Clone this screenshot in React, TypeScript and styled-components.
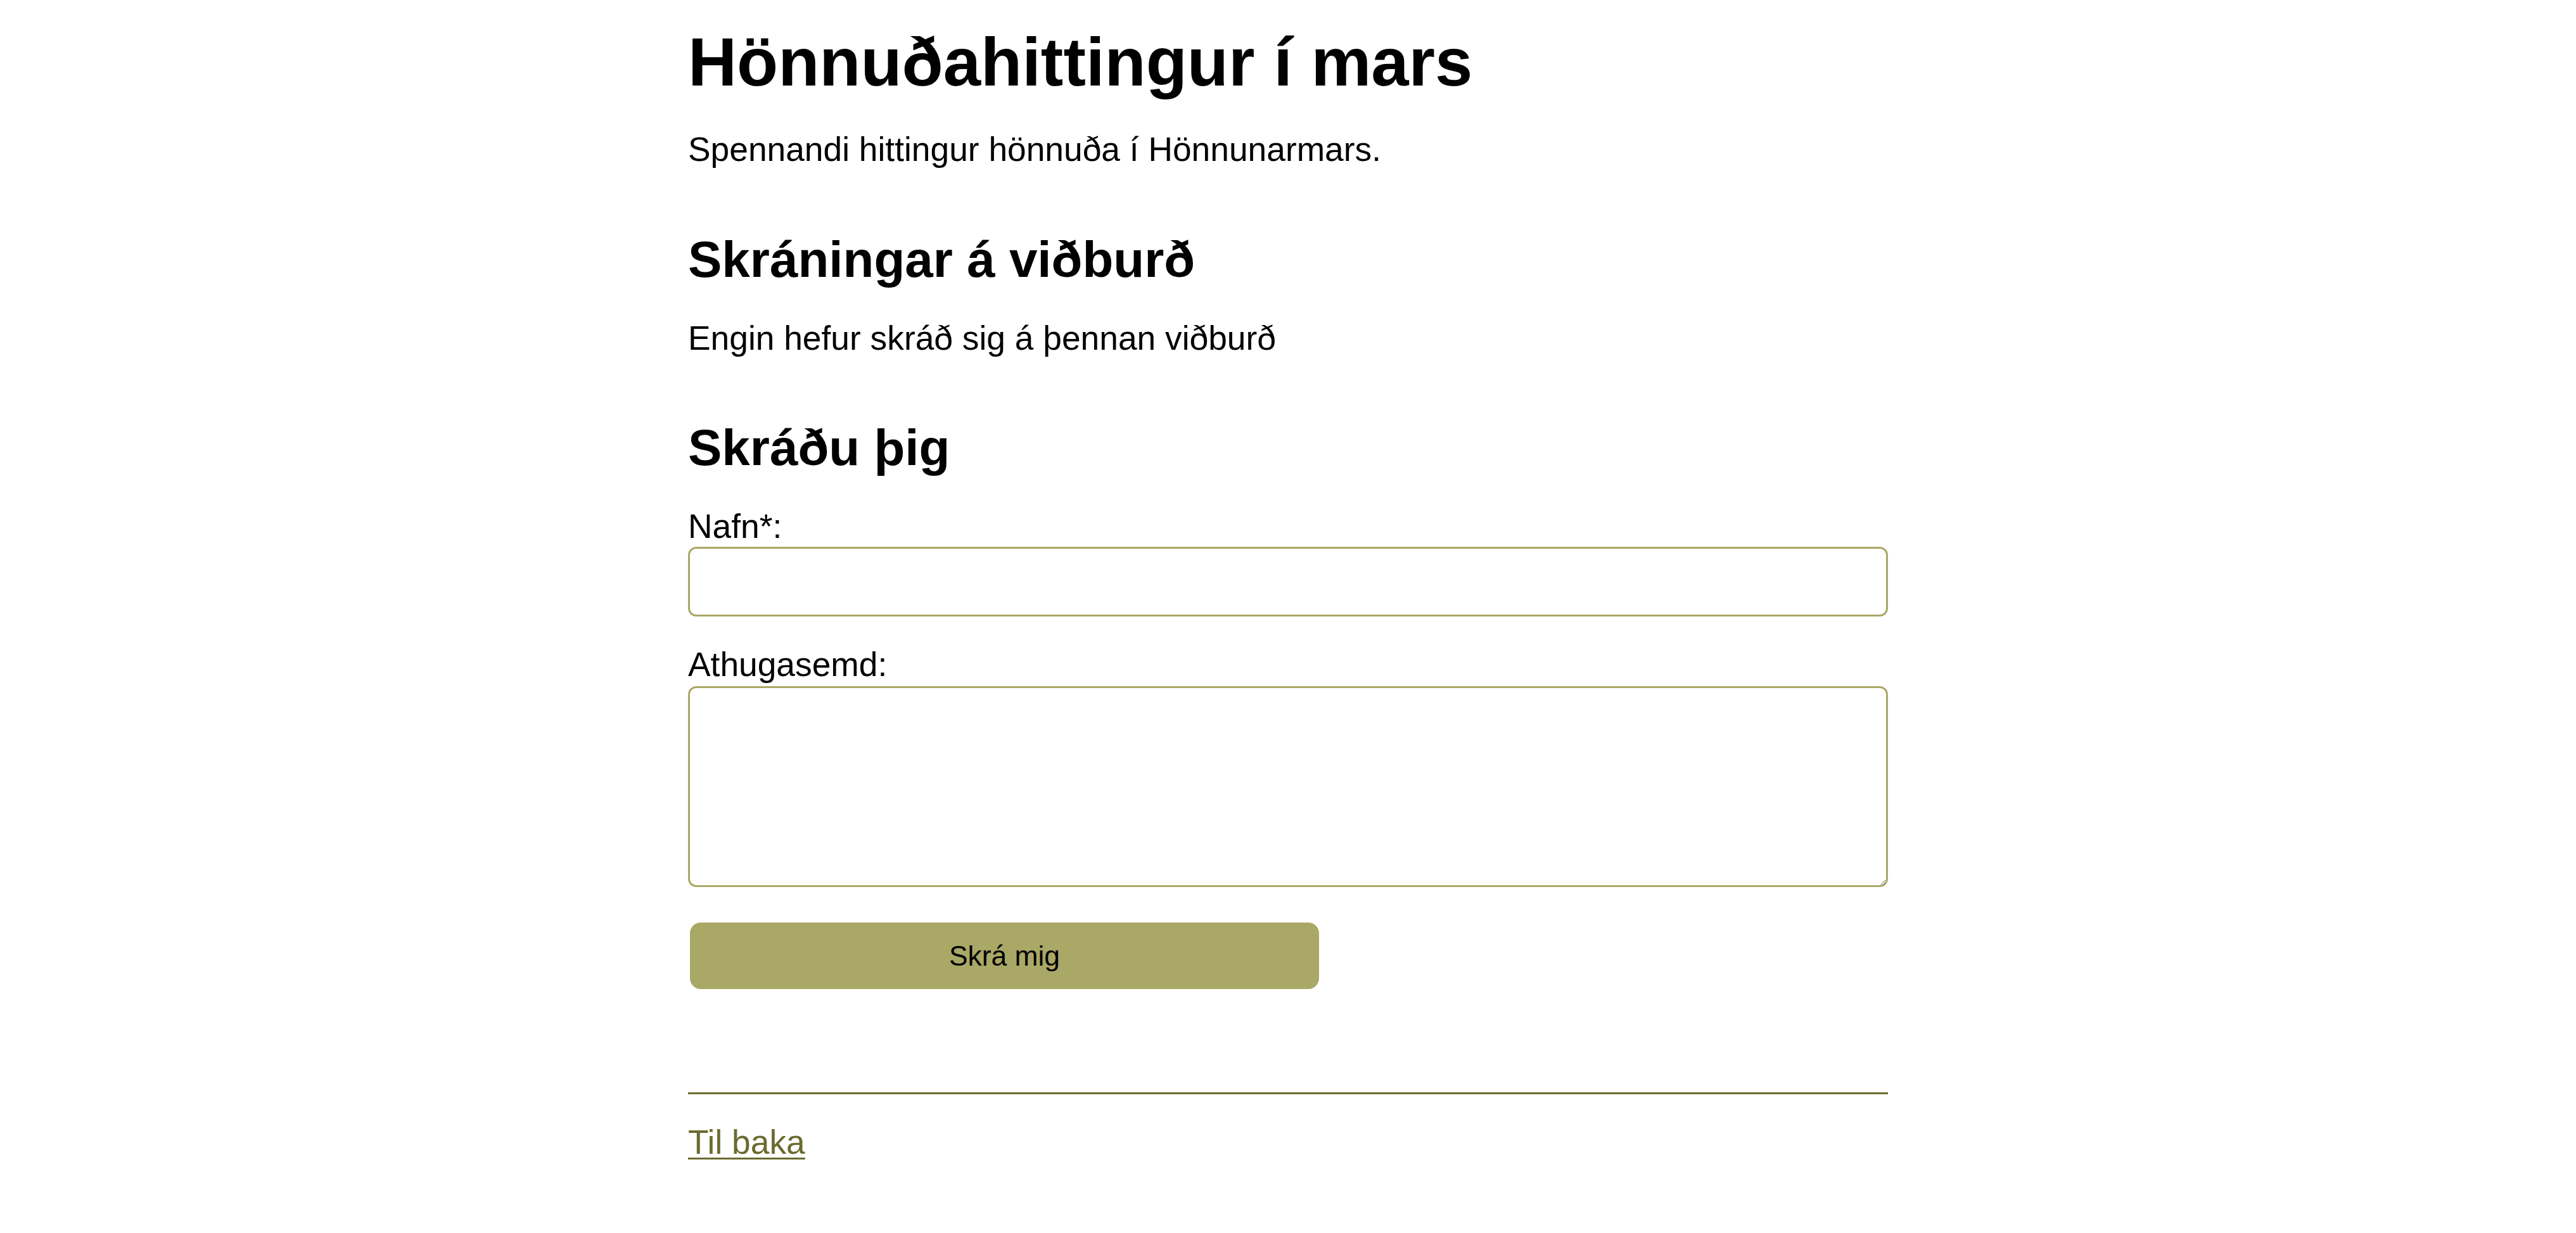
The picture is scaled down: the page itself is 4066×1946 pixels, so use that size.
import React from "react";
import styled, { createGlobalStyle } from "styled-components";

const Global = createGlobalStyle`
  html, body { margin: 0; padding: 0; background: #ffffff; }
  body { font-family: "Liberation Sans", Arial, Helvetica, sans-serif; color: #000; }
  * { box-sizing: border-box; }
`;

const Main = styled.main`
  width: 1894px;
  margin: 0 auto;
  padding-top: 34px;
  display: flex;
  flex-direction: column;
`;

const Title = styled.h1`
  margin: 0;
  font-size: 106.67px;
  line-height: 128px;
  font-weight: 700;
`;

const Heading = styled.h2<{ $gap: number }>`
  margin: ${(p) => p.$gap}px 0 0;
  font-size: 80px;
  line-height: 96px;
  font-weight: 700;
`;

const Text = styled.p<{ $gap: number }>`
  margin: ${(p) => p.$gap}px 0 0;
  font-size: 53.33px;
  line-height: 64px;
`;

const Form = styled.form`
  display: flex;
  flex-direction: column;
  margin-top: 44px;
`;

const Field = styled.div<{ $gap: number }>`
  display: flex;
  flex-direction: column;
  margin-top: ${(p) => p.$gap}px;
`;

const Label = styled.label`
  font-size: 53.33px;
  line-height: 64px;
`;

const Input = styled.input`
  width: 100%;
  height: 110px;
  border: 3px solid #aaa866;
  border-radius: 13px;
  padding: 0 16px;
  font: inherit;
  font-size: 44px;
  outline: none;
`;

const TextArea = styled.textarea`
  width: 100%;
  height: 317px;
  margin-top: 2px;
  border: 3px solid #aaa866;
  border-radius: 13px;
  padding: 16px;
  font: inherit;
  font-size: 44px;
  outline: none;
  resize: vertical;
`;

const Button = styled.button`
  align-self: flex-start;
  margin-top: 56px;
  margin-left: 3px;
  width: 993px;
  height: 105px;
  border: none;
  border-radius: 17px;
  background: #aaa866;
  color: #000;
  font-family: "Liberation Sans", Arial, Helvetica, sans-serif;
  font-size: 44.4px;
  cursor: pointer;
`;

const Rule = styled.hr`
  margin: 163px 0 0;
  border: none;
  height: 3px;
  background: #6b6b2f;
`;

const BackLink = styled.a`
  align-self: flex-start;
  margin-top: 44px;
  font-size: 53.33px;
  line-height: 64px;
  color: #6b6b2f;
  text-decoration: underline;
  text-decoration-thickness: 3.33px;
  text-underline-offset: 6px;
`;

export default function App() {
  return (
    <>
      <Global />
      <Main>
        <Title>Hönnuðahittingur í mars</Title>
        <Text $gap={42}>Spennandi hittingur hönnuða í Hönnunarmars.</Text>
        <Heading $gap={94}>Skráningar á viðburð</Heading>
        <Text $gap={44}>Engin hefur skráð sig á þennan viðburð</Text>
        <Heading $gap={93}>Skráðu þig</Heading>
        <Form onSubmit={(e) => e.preventDefault()}>
          <Field $gap={0}>
            <Label htmlFor="name">Nafn*:</Label>
            <Input id="name" type="text" />
          </Field>
          <Field $gap={44}>
            <Label htmlFor="comment">Athugasemd:</Label>
            <TextArea id="comment" />
          </Field>
          <Button type="submit">Skrá mig</Button>
        </Form>
        <Rule />
        <BackLink href="#">Til baka</BackLink>
      </Main>
    </>
  );
}
